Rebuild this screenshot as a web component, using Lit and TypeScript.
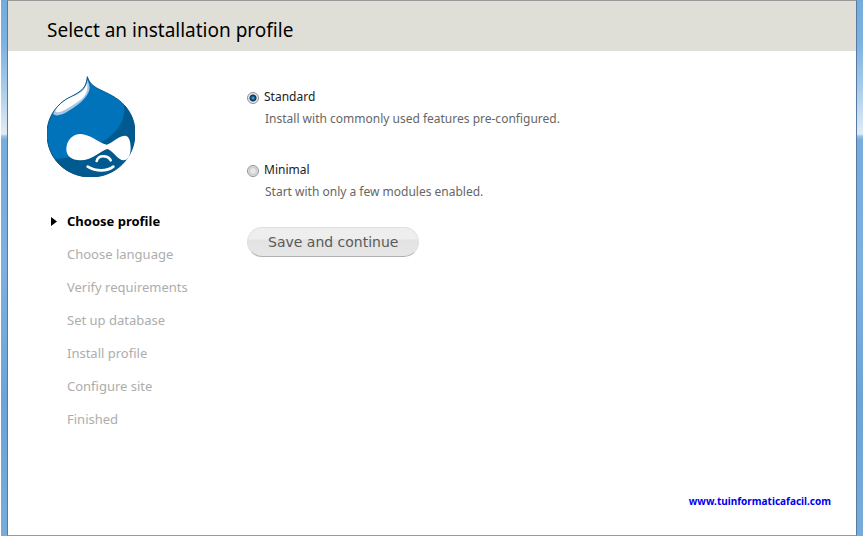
import { LitElement, html, css, svg } from "lit";
import { customElement, state } from "lit/decorators.js";

const steps = [
  "Choose profile",
  "Choose language",
  "Verify requirements",
  "Set up database",
  "Install profile",
  "Configure site",
  "Finished",
];

const profiles = [
  { id: "standard", name: "Standard", text: "Install with commonly used features pre-configured." },
  { id: "minimal", name: "Minimal", text: "Start with only a few modules enabled." },
];

const drop = "M154 26C160 46 172 56 198 68C228 82 252 94 272 120C288 141 297 165 297 196C297 270 238 327 165 327C91 327 33 272 33 198C33 160 48 130 74 106C94 88 112 85 132 70C148 58 152 44 154 26Z";

const logo = svg`
  <svg class="logo" viewBox="33 24 264 303" role="img" aria-label="Drupal">
    <defs><clipPath id="drop"><path d=${drop} /></clipPath></defs>
    <g clip-path="url(#drop)">
      <rect x="30" y="20" width="270" height="310" fill="#0073ba" />
      <path d="M262 105C274 150 246 194 198 222C150 254 100 276 46 272L60 330H300V110Z" fill="#005a8f" />
      <path d="M154 34C160 50 164 60 158 72C148 94 126 112 96 130C78 142 58 146 52 138C50 128 68 104 90 92C116 80 154 66 154 34Z" fill="#a9c6e4" />
    </g>
    <path d="M153 44C156 62 154 76 138 92C118 108 96 120 80 129C68 135 58 134 58 128C62 116 82 98 102 88C128 80 148 68 153 44Z" fill="#fff" />
    <path d=${drop} fill="none" stroke="#075587" stroke-width="3" />
    <path d="M91 244C91 216 110 198 134 198C160 198 188 224 212 230C232 223 246 204 266 203C280 203 284 222 284 240C284 262 276 277 263 277C246 277 230 248 215 243C195 246 172 277 132 277C107 277 91 264 91 244Z" fill="#fff" />
    <path d="M182 279C185 268 194 264 205 265C216 266 221 270 224 277" fill="none" stroke="#fff" stroke-width="8" stroke-linecap="round" />
    <path d="M155 296C180 311 213 311 232 296" fill="none" stroke="#fff" stroke-width="8" stroke-linecap="round" />
  </svg>`;

@customElement("app-root")
export class AppRoot extends LitElement {
  static styles = css`
    :host {
      display: block;
      font-family: "Noto Sans", "Open Sans", sans-serif;
      color: #222;
    }
    * {
      box-sizing: border-box;
    }
    .desktop {
      min-height: 100vh;
      display: flex;
      padding: 0 6px;
      background: linear-gradient(#76abdd 0, #7bb0e0 40px, #a5c9e9 85px, #e0edf7 134px, #9cc5e8 136px, #78acdd 140px, #7db0df 270px, #6da3d6 400px, #77acda 100%);
      border: solid #fff;
      border-width: 0 1px;
    }
    .page {
      flex: 1;
      display: flex;
      flex-direction: column;
      background: #fff;
      border: 1px solid #999;
      border-left-color: #557ba1;
      border-right-color: #557ba1;
    }
    header {
      background: #e0dfd7;
      padding: 15px 39px 7px;
    }
    h1 {
      margin: 0;
      font-size: 19px;
      line-height: 28px;
      font-weight: 400;
      color: #000;
    }
    .body {
      flex: 1;
      display: grid;
      grid-template-columns: 160px 1fr;
      column-gap: 40px;
      padding: 25px 39px 0;
    }
    .logo {
      display: block;
      width: 88px;
      height: 101px;
    }
    ol {
      list-style: none;
      margin: 28px 0 0;
      padding: 0;
      font-size: 13px;
      line-height: 33px;
      color: #adadad;
    }
    li {
      display: flex;
      align-items: center;
      padding-left: 20px;
    }
    .active {
      padding-left: 4px;
      gap: 10px;
      font-weight: 700;
      color: #000;
    }
    .arrow {
      width: 6px;
      height: 9px;
    }
    form {
      padding-top: 10px;
    }
    .option {
      display: grid;
      grid-template-columns: 12px 1fr;
      column-gap: 5px;
      align-items: center;
      margin-bottom: 29px;
      font-size: 12px;
      line-height: 22px;
    }
    .option:nth-child(2) {
      margin-bottom: 24px;
    }
    .option input {
      appearance: none;
      width: 12px;
      height: 12px;
      margin: 2px 0 0;
      border: 1px solid #8c9196;
      border-radius: 50%;
      background: radial-gradient(circle, #e8e8e8 2px, #c6c8ca 4px, #f2f2f2 5px);
    }
    .option input:checked {
      background: radial-gradient(circle, #58b5e4 0, #14527f 2px, #12304d 3px, #e6e8ea 4px);
    }
    .option p {
      grid-column: 2;
      margin: 0;
      padding-left: 1px;
      color: #666;
    }
    button {
      display: block;
      height: 30px;
      padding: 0 20px;
      border: 1px solid #e0e0e0;
      border-bottom-color: #b0b0b0;
      border-radius: 15px;
      background: linear-gradient(#eee 0, #eee 11px, #e3e3e3 12px, #e6e6e6 100%);
      font: 14px/28px "DejaVu Sans", sans-serif;
      color: #5a5a5a;
    }
    footer {
      padding: 0 25px 25px;
      text-align: right;
      font-size: 10px;
      font-weight: 700;
      line-height: 18px;
    }
    a {
      color: #00e;
      text-decoration: none;
    }
  `;

  @state() private selected = "standard";

  render() {
    return html`
      <div class="desktop">
        <div class="page">
          <header><h1>Select an installation profile</h1></header>
          <div class="body">
            <aside>
              ${logo}
              <ol>
                ${steps.map((step, i) =>
                  i === 0
                    ? html`<li class="active" aria-current="step">
                        <svg class="arrow" viewBox="0 0 6 9" aria-hidden="true"><path d="M0 0L6 4.5L0 9Z" /></svg>${step}
                      </li>`
                    : html`<li>${step}</li>`
                )}
              </ol>
            </aside>
            <main>
              <form @submit=${(e: Event) => e.preventDefault()}>
                ${profiles.map(
                  (p) => html`<div class="option">
                    <input type="radio" name="profile" id=${p.id} aria-describedby="${p.id}-text"
                      .checked=${this.selected === p.id} @change=${() => (this.selected = p.id)} />
                    <label for=${p.id}>${p.name}</label>
                    <p id="${p.id}-text">${p.text}</p>
                  </div>`
                )}
                <button type="submit">Save and continue</button>
              </form>
            </main>
          </div>
          <footer><a href="http://www.tuinformaticafacil.com">www.tuinformaticafacil.com</a></footer>
        </div>
      </div>
    `;
  }
}
